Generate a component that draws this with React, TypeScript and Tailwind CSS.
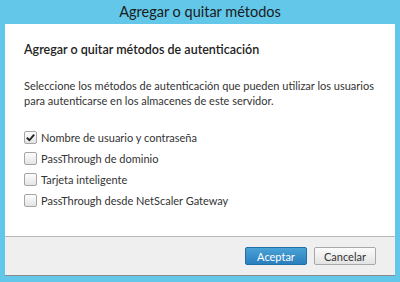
import React, { useState } from "react";

const methods = [
  { id: "pwd", label: "Nombre de usuario y contraseña", checked: true },
  { id: "domain", label: "PassThrough de dominio", checked: false },
  { id: "smart", label: "Tarjeta inteligente", checked: false },
  { id: "netscaler", label: "PassThrough desde NetScaler Gateway", checked: false },
];

const CheckBox: React.FC<{ checked: boolean; onClick: () => void }> = ({ checked, onClick }) => (
  <button
    type="button"
    onClick={onClick}
    className="w-[13px] h-[13px] rounded-[2px] border border-[#a5a5a5] bg-gradient-to-b from-[#fdfdfd] to-[#e4e4e4] flex items-center justify-center shrink-0"
  >
    {checked && (
      <svg viewBox="0 0 12 12" className="w-[11px] h-[11px]">
        <path d="M2 6.3 L4.8 9 L10 2.8" fill="none" stroke="#222" strokeWidth="2" />
      </svg>
    )}
  </button>
);

export default function App() {
  const [items, setItems] = useState(methods);

  const toggle = (id: string) => {
    setItems(items.map((m) => (m.id === id ? { ...m, checked: !m.checked } : m)));
  };

  return (
    <div
      className="w-[400px] h-[282px] bg-[#62c7e9] flex flex-col px-[5px] pb-[6px]"
      style={{ fontFamily: 'Lato, "Open Sans", sans-serif' }}
    >
      <div className="h-[24px] flex items-center justify-center text-[14.5px] text-[#1b1b1b]">
        Agregar o quitar métodos
      </div>

      <div className="flex-1 bg-white flex flex-col">
        <div className="flex-1 px-[19px] pt-[18px]">
          <h2 className="text-[12.5px] font-semibold text-[#222] leading-[16px] whitespace-nowrap">
            Agregar o quitar métodos de autenticación
          </h2>
          <p className="mt-[20px] text-[11px] leading-[15px] text-[#333] whitespace-nowrap">
            Seleccione los métodos de autenticación que pueden utilizar los usuarios
            <br />
            para autenticarse en los almacenes de este servidor.
          </p>
          <div className="mt-[23px] flex flex-col gap-[8px]">
            {items.map((m) => (
              <label key={m.id} className="flex items-center gap-[4px] text-[11px] leading-[13px] text-[#333]">
                <CheckBox checked={m.checked} onClick={() => toggle(m.id)} />
                <span>{m.label}</span>
              </label>
            ))}
          </div>
        </div>

        <div className="h-[40px] bg-[#efefef] border-t border-[#b9b9b9] border-b border-b-[#8a8a8a] flex items-center justify-end gap-[7px] pr-[19px]">
          <button
            type="button"
            className="w-[62px] h-[18px] rounded-[2px] border border-[#1f6fa8] bg-gradient-to-b from-[#4aa2d6] to-[#2a7fbd] text-white text-[11px] leading-none"
          >
            Aceptar
          </button>
          <button
            type="button"
            className="w-[62px] h-[18px] rounded-[2px] border border-[#a8a8a8] bg-gradient-to-b from-[#fbfbfb] to-[#e3e3e3] text-[#333] text-[11px] leading-none"
          >
            Cancelar
          </button>
        </div>
      </div>
    </div>
  );
}
